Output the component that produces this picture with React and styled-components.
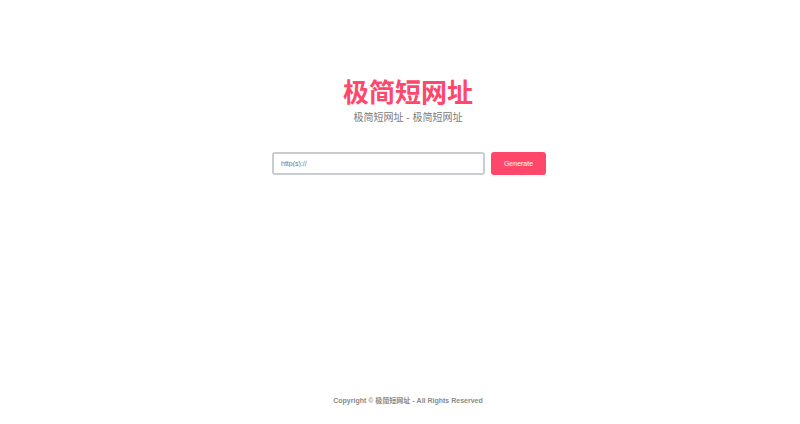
import React from 'react';
import styled, { createGlobalStyle } from 'styled-components';

const GlobalStyle = createGlobalStyle`
  html, body {
    margin: 0;
    padding: 0;
    background: #ffffff;
    font-family: "Liberation Sans", Arial, "Noto Sans CJK SC", sans-serif;
  }
`

const Page = styled.div`
  display: flex;
  flex-direction: column;
  min-height: 424px;
  padding-left: 16px;
`

const Main = styled.main`
  flex: 1;
  display: flex;
  flex-direction: column;
  align-items: center;
  padding-top: 75px;
`

const Title = styled.h1`
  margin: 0;
  font-size: 26px;
  line-height: 32px;
  font-weight: 700;
  color: #ff476b;
  font-family: "Noto Sans CJK SC", sans-serif;
`

const Subtitle = styled.p`
  margin: 4px 0 0;
  font-size: 10px;
  line-height: 14px;
  color: #7a7a7a;
  font-family: "Liberation Sans", "Noto Sans CJK SC", sans-serif;
`

const Form = styled.form`
  display: flex;
  align-items: center;
  gap: 6px;
  margin-top: 27px;
  margin-left: 2px;
`

const Input = styled.input`
  box-sizing: border-box;
  width: 213px;
  height: 23px;
  padding: 0 7px;
  border: 2px solid #c9cdd2;
  border-radius: 3px;
  font-size: 7px;
  font-family: "Liberation Sans", Arial, sans-serif;
  color: #333;
  outline: none;

  &::placeholder {
    color: #777;
  }
`

const Button = styled.button`
  box-sizing: border-box;
  width: 55px;
  height: 23px;
  border: none;
  border-radius: 3px;
  background: #ff476b;
  color: #fff;
  font-size: 7px;
  font-family: "Liberation Sans", Arial, sans-serif;
  cursor: pointer;
`

const Footer = styled.footer`
  text-align: center;
  padding-bottom: 18px;
  font-size: 7px;
  line-height: 10px;
  font-weight: 700;
  color: #8a8a8a;
  font-family: "Liberation Sans", Arial, "Noto Sans CJK SC", sans-serif;
`

export default function App() {
  return (
    <Page>
      <GlobalStyle />
      <Main>
        <Title>极简短网址</Title>
        <Subtitle>极简短网址 - 极简短网址</Subtitle>
        <Form onSubmit={e => e.preventDefault()}>
          <Input type="text" placeholder="http(s)://" />
          <Button type="submit">Generate</Button>
        </Form>
      </Main>
      <Footer>Copyright © 极简短网址 - All Rights Reserved</Footer>
    </Page>
  );
}
